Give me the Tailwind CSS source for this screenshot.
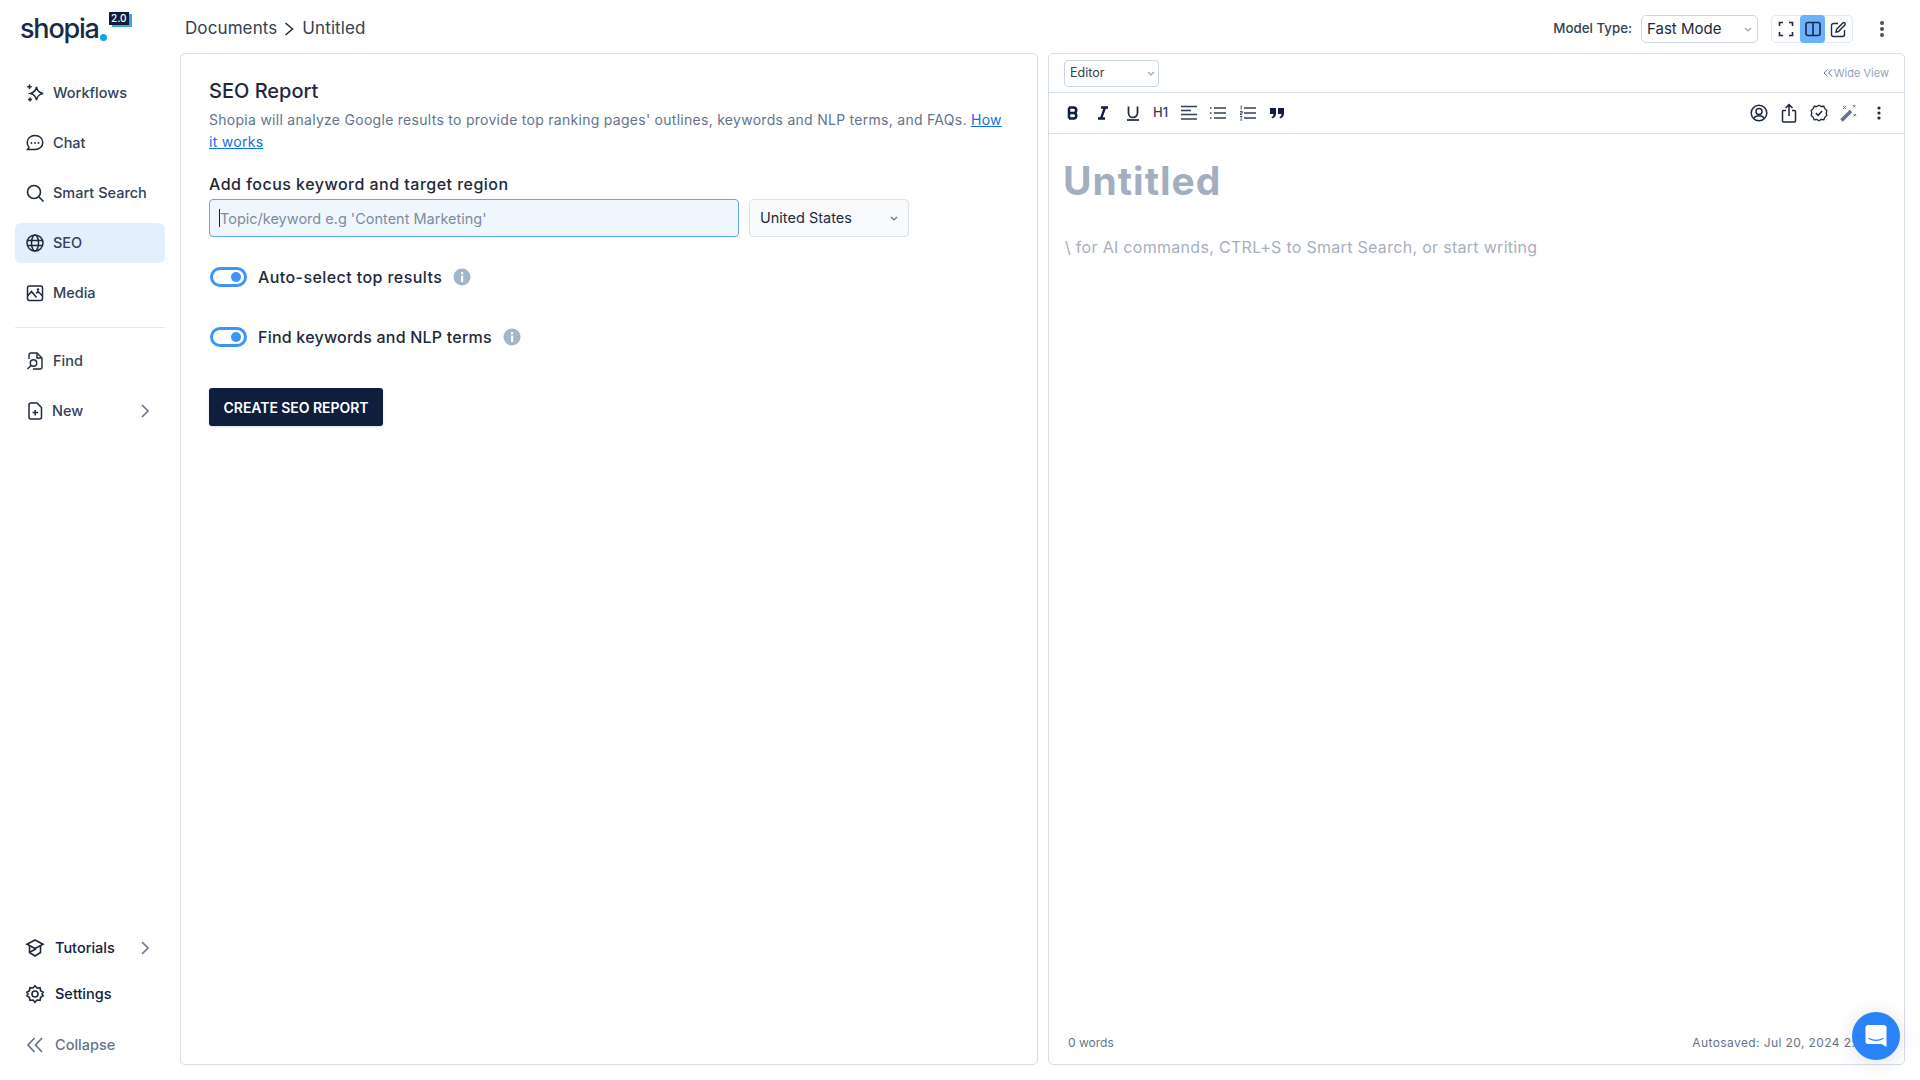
<!DOCTYPE html>
<html lang="en">
<head>
<meta charset="utf-8">
<title>Shopia SEO</title>
<script src="https://cdn.jsdelivr.net/npm/@tailwindcss/browser@4"></script>
</head>
<body class="bg-white font-['Inter',sans-serif] text-[#1e293b] overflow-hidden">
<div class="w-[1920px] h-[1080px] flex flex-col relative overflow-hidden">

  <!-- top bar -->
  <header class="h-[53px] pt-[5px] shrink-0 flex items-center">
    <div class="w-[185px] pl-[20px] flex items-start shrink-0">
      <span class="text-[27px] leading-[30px] font-medium tracking-[-1.2px] text-[#172a46]">shopia</span>
      <span class="w-[7px] h-[7px] rounded-full bg-[#0ea5e9] mt-[20px] ml-[1px]"></span>
      <span class="relative ml-[2px] -mt-[2px] w-[20px] h-[13px] bg-[#0f1e3d] text-white text-[10px] leading-[13px] text-center font-medium shadow-[3px_2px_0_#38a3f1]">2.0</span>
    </div>
    <nav class="flex items-center text-[17px] text-[#334155]">
      <span class="tracking-[0.1px]">Documents</span>
      <svg class="ml-[6px] mr-[7px]" width="12" height="16" viewBox="0 0 12 16" fill="none" stroke="#1e293b" stroke-width="1.5"><path d="M2.500 2l7 6-7 6"/></svg>
      <span class="tracking-[0.1px]">Untitled</span>
    </nav>
    <div class="ml-auto flex items-center pr-[30px]">
      <span class="text-[13.300px] font-medium text-[#334155] mr-[9px]">Model Type:</span>
      <div class="relative w-[117px] h-[28px] border border-[#cbd5e1] rounded-[5px] flex items-center pl-[5px] text-[15px] text-[#1e293b]">Fast Mode
        <svg class="absolute right-[4px] top-[10px]" width="10" height="8" viewBox="0 0 10 8" fill="none" stroke="#94a3b8" stroke-width="1.2"><path d="M2 2l3 3 3-3"/></svg>
      </div>
      <div class="ml-[13px] w-[82px] h-[28px] border border-[#e2e8f0] rounded-[5px] flex items-center">
        <div class="w-[28px] h-full flex items-center justify-center">
          <svg width="16" height="16" viewBox="0 0 16 16" fill="none" stroke="#1e293b" stroke-width="1.6"><path d="M1.500 5V1.500H5M11 1.500h3.500V5M14.500 11v3.500H11M5 14.500H1.500V11"/></svg>
        </div>
        <div class="w-[25px] h-[28px] bg-[#6cb1ff] rounded-[4px] flex items-center justify-center">
          <svg width="16" height="16" viewBox="0 0 16 16" fill="none" stroke="#1e293b" stroke-width="1.6"><rect x="1" y="1.500" width="14" height="13" rx="2"/><path d="M8 1.500v13"/></svg>
        </div>
        <div class="w-[27px] h-full flex items-center justify-center">
          <svg width="17" height="17" viewBox="0 0 17 17" fill="none" stroke="#1e293b" stroke-width="1.4"><path d="M8 2.500H3.500a2 2 0 0 0-2 2v9a2 2 0 0 0 2 2h9a2 2 0 0 0 2-2V9"/><path d="M6.500 8.500l6.300-6.400a1.400 1.400 0 0 1 2 2L8.500 10.500l-2.500.5z"/></svg>
        </div>
      </div>
      <svg class="ml-[21px]" width="16" height="20" viewBox="0 0 16 20" fill="#475569"><circle cx="8" cy="4" r="2"/><circle cx="8" cy="10" r="2"/><circle cx="8" cy="16" r="2"/></svg>
    </div>
  </header>

  <div class="flex-1 flex min-h-0 pb-[15px]">
    <!-- sidebar -->
    <aside class="w-[180px] shrink-0 pl-[15px] pr-[15px] flex flex-col text-[14.500px] font-medium text-[#334155]">
      <div class="mt-[20px] flex flex-col">
        <a class="h-[40px] mb-[10px] flex items-center px-[10px] gap-[8px] rounded-[6px]">
          <svg width="20" height="20" viewBox="0 0 20 20" fill="none" stroke="#1e293b" stroke-width="1.5"><path d="M11.500 4c.8 4 2.200 5.500 6.500 6.500-4.300 1-5.700 2.500-6.500 6.500-.8-4-2.200-5.500-6-6.500 3.800-1 5.200-2.500 6-6.500z"/><path d="M4.500 1.500v4.500M2.300 3.700h4.400M5 14.500v4M3 16.500h4"/></svg>
          Workflows</a>
        <a class="h-[40px] mb-[10px] flex items-center px-[10px] gap-[8px] rounded-[6px]">
          <svg width="20" height="20" viewBox="0 0 20 20" fill="none" stroke="#1e293b" stroke-width="1.5"><path d="M10 2.500c4.500 0 7.800 3 7.800 7s-3.300 7-7.800 7H2.500l1.500-2.200C2.800 13 2.200 11.500 2.200 9.500c0-4 3.300-7 7.800-7z"/><path d="M6.500 10h.01M10 10h.01M13.500 10h.01" stroke-linecap="round" stroke-width="1.800"/></svg>
          Chat</a>
        <a class="h-[40px] mb-[10px] flex items-center px-[10px] gap-[8px] rounded-[6px]">
          <svg width="20" height="20" viewBox="0 0 20 20" fill="none" stroke="#1e293b" stroke-width="1.6"><circle cx="9" cy="9" r="6.500"/><path d="M14 14l4.500 4.500"/></svg>
          Smart Search</a>
        <a class="h-[40px] mb-[10px] flex items-center px-[10px] gap-[8px] rounded-[6px] bg-[#e3effd]">
          <svg width="20" height="20" viewBox="0 0 20 20" fill="none" stroke="#1e293b" stroke-width="1.5"><circle cx="10" cy="10" r="8"/><ellipse cx="10" cy="10" rx="3.500" ry="8"/><path d="M2 7.500h16M2 12.500h16"/></svg>
          SEO</a>
        <a class="h-[40px] flex items-center px-[10px] gap-[8px] rounded-[6px]">
          <svg width="20" height="20" viewBox="0 0 20 20" fill="none" stroke="#1e293b" stroke-width="1.5"><rect x="2.500" y="3" width="15" height="14.500" rx="2"/><path d="M2.500 13l4-4.500 5 6M11 10.500l2-2 4.500 4.500"/><circle cx="13" cy="6.500" r=".6"/></svg>
          Media</a>
      </div>
      <div class="h-px bg-[#e2e8f0] mt-[14px] mb-[13px]"></div>
      <a class="h-[40px] mb-[10px] flex items-center px-[10px] gap-[8px]">
        <svg width="20" height="20" viewBox="0 0 20 20" fill="none" stroke="#1e293b" stroke-width="1.4"><path d="M4 8V4a2 2 0 0 1 2-2h6l5 5v9a2 2 0 0 1-2 2H8"/><path d="M12 2.500V7h4.500"/><circle cx="8.500" cy="12" r="3.200"/><path d="M6 14.500L2.500 18"/></svg>
        Find</a>
      <a class="h-[40px] flex items-center px-[10px] gap-[7px]">
        <svg width="20" height="20" viewBox="0 0 20 20" fill="none" stroke="#1e293b" stroke-width="1.500"><path d="M4 4a2 2 0 0 1 2-2h6l4.500 4.500V16a2 2 0 0 1-2 2H6a2 2 0 0 1-2-2z"/><path d="M7.500 11.500h5.500M10.200 9v5.500"/></svg>
        New
        <svg class="ml-auto mr-[5px]" width="10" height="16" viewBox="0 0 10 16" fill="none" stroke="#64748b" stroke-width="1.6"><path d="M2 2l6 6-6 6"/></svg>
      </a>
      <div class="mt-auto flex flex-col">
        <a class="h-[40px] mb-[6px] flex items-center px-[10px] gap-[10px] text-[#0f1e3d]">
          <svg width="20" height="20" viewBox="0 0 20 20" fill="none" stroke="#1e293b" stroke-width="1.600"><path d="M10 2L2 6.200 10 10.500l8-4.300z"/><path d="M4.500 8v6.500L10 18l5.500-3.500V8"/><path d="M5 14l6-3"/></svg>
          Tutorials
          <svg class="ml-auto mr-[5px]" width="10" height="16" viewBox="0 0 10 16" fill="none" stroke="#64748b" stroke-width="1.6"><path d="M2 2l6 6-6 6"/></svg>
        </a>
        <a class="h-[40px] mb-[11px] flex items-center px-[10px] gap-[10px] text-[#0f1e3d]">
          <svg width="20" height="20" viewBox="0 0 20 20" fill="none" stroke="#1e293b" stroke-width="1.600"><path d="M10 1.800l2 2.200 3-.3.600 3 2.600 1.500L17 10l1.200 1.800-2.600 1.500-.6 3-3-.3-2 2.200-2-2.200-3 .3-.6-3-2.600-1.500L3 10 1.800 8.200l2.600-1.500.6-3 3 .3z"/><circle cx="10" cy="10" r="3"/></svg>
          Settings</a>
        <a class="h-[40px] flex items-center px-[10px] gap-[10px] text-[#64748b]">
          <svg width="20" height="20" viewBox="0 0 20 20" fill="none" stroke="#64748b" stroke-width="1.700"><path d="M9.500 3L3 10l6.500 7M17 3l-6.500 7 6.500 7"/></svg>
          Collapse</a>
      </div>
    </aside>

    <!-- left panel -->
    <main class="w-[858px] border border-[#d5dfea] rounded-[5px] shrink-0 pl-[28px] pr-[30px] pt-[24px]">
      <h1 class="text-[20px] leading-[26px] font-medium text-[#1e293b]">SEO Report</h1>
      <p class="mt-[5px] text-[14px] leading-[22px] text-[#64748b] tracking-[0.28px] w-[800px]">Shopia will analyze Google results to provide top ranking pages' outlines, keywords and NLP terms, and FAQs. <a class="text-[#0f6fe8] underline">How</a><br><a class="text-[#0f6fe8] underline">it works</a></p>
      <h2 class="mt-[19px] text-[16px] leading-[24px] font-medium text-[#1e293b] tracking-[0.48px]">Add focus keyword and target region</h2>
      <div class="mt-[3px] flex gap-[10px]">
        <div class="relative w-[530px] h-[38px]">
          <input class="w-full h-full bg-[#f0f6fd] border border-[#60a5fa] rounded-[4px] pl-[10px] text-[14.500px] outline-none placeholder:text-[#7c8ba1]" placeholder="Topic/keyword e.g 'Content Marketing'">
          <span class="absolute left-[10px] top-[10px] w-px h-[18px] bg-[#0f1e3d]"></span>
        </div>
        <div class="relative w-[160px] h-[38px] bg-[#f8fafc] border border-[#dbe3ec] rounded-[4px] flex items-center pl-[10px] text-[14.500px] text-[#1e293b]">United States
          <svg class="absolute right-[9px] top-[15px]" width="10" height="8" viewBox="0 0 10 8" fill="none" stroke="#64748b" stroke-width="1.2"><path d="M2 2l3 3 3-3"/></svg>
        </div>
      </div>
      <div class="mt-[30px] flex items-center h-[20px]">
        <span class="ml-[1px] w-[37px] h-[20px] rounded-full border-[3px] border-[#3b93fb] bg-white flex items-center justify-end pr-[3px]"><span class="w-[10px] h-[10px] rounded-full bg-[#3b93fb]"></span></span>
        <span class="ml-[11px] text-[16px] font-medium text-[#1e293b] tracking-[0.42px]">Auto-select top results</span>
        <svg class="ml-[11px]" width="18" height="18" viewBox="0 0 18 18"><circle cx="9" cy="9" r="8.500" fill="#a3b5c9"/><rect x="8" y="7.500" width="2.200" height="6.500" fill="#fff"/><rect x="8" y="4" width="2.200" height="2.200" fill="#fff"/></svg>
      </div>
      <div class="mt-[40px] flex items-center h-[20px]">
        <span class="ml-[1px] w-[37px] h-[20px] rounded-full border-[3px] border-[#3b93fb] bg-white flex items-center justify-end pr-[3px]"><span class="w-[10px] h-[10px] rounded-full bg-[#3b93fb]"></span></span>
        <span class="ml-[11px] text-[16px] font-medium text-[#1e293b] tracking-[0.22px]">Find keywords and NLP terms</span>
        <svg class="ml-[11px]" width="18" height="18" viewBox="0 0 18 18"><circle cx="9" cy="9" r="8.500" fill="#a3b5c9"/><rect x="8" y="7.500" width="2.200" height="6.500" fill="#fff"/><rect x="8" y="4" width="2.200" height="2.200" fill="#fff"/></svg>
      </div>
      <button class="mt-[41px] w-[174px] h-[38px] bg-[#0f1e3d] rounded-[3px] text-white text-[14px] font-semibold tracking-[-0.05px] shadow-sm">CREATE SEO REPORT</button>
    </main>

    <!-- right panel -->
    <section class="ml-[10px] w-[857px] border border-[#d5dfea] rounded-[5px] shrink-0 flex flex-col relative">
      <div class="h-[39px] border-b border-[#d5dfea] flex items-center pl-[15px] pr-[15px] shrink-0">
        <div class="relative w-[95px] h-[27px] border border-[#cbd5e1] rounded-[4px] flex items-center pl-[5px] text-[12.500px] text-[#334155]">Editor
          <svg class="absolute right-[2px] top-[9px]" width="10" height="8" viewBox="0 0 10 8" fill="none" stroke="#94a3b8" stroke-width="1.1"><path d="M2 2l3 3 3-3"/></svg>
        </div>
        <div class="ml-auto flex items-center text-[11px] text-[#94a3b8]">
          <svg class="mr-[1px]" width="10" height="10" viewBox="0 0 10 10" fill="none" stroke="#64748b" stroke-width="1"><path d="M4.500 1.500L1 5l3.500 3.500M9 1.500L5.500 5 9 8.500"/></svg>
          Wide View</div>
      </div>
      <div class="h-[41px] border-b border-[#d5dfea] flex items-center pl-[16px] pr-[10px] shrink-0 text-[#1e293b]">
        <div class="w-[30px] h-[20px] flex items-center"><svg width="16" height="16" viewBox="0 0 16 16" fill="none" stroke="#0f1e3d" stroke-width="2.500"><path d="M4 2.500v11M4 2.500h4.500a2.700 2.700 0 0 1 0 5.500H4M4 8h5a2.800 2.800 0 0 1 0 5.500H4"/></svg></div>
        <div class="w-[30px] h-[20px] flex items-center"><svg width="16" height="16" viewBox="0 0 16 16" fill="none" stroke="#0f1e3d" stroke-width="2.300"><path d="M6 2.500h7M3 13.500h7M10 2.500l-4 11"/></svg></div>
        <div class="w-[28px] h-[20px] flex items-center"><svg width="16" height="16" viewBox="0 0 16 16" fill="none" stroke="#1e293b" stroke-width="1.700"><path d="M3.500 1.500v6.500a4.500 4.500 0 0 0 9 0V1.500"/><path d="M2 15h12"/></svg></div>
        <div class="w-[28px] h-[20px] flex items-center text-[13px] text-[#334155] font-medium">H1</div>
        <div class="w-[29px] h-[20px] flex items-center"><svg width="16" height="16" viewBox="0 0 16 16" fill="none" stroke="#334155" stroke-width="1.500"><path d="M0 1.500h16M0 5.500h10M0 9.500h16M0 14h16"/></svg></div>
        <div class="w-[30px] h-[20px] flex items-center"><svg width="16" height="16" viewBox="0 0 16 16" fill="none" stroke="#334155" stroke-width="1.500"><path d="M4 3h12M4 8h12M4 13h12M0 3h1.500M0 8h1.500M0 13h1.500"/></svg></div>
        <div class="w-[30px] h-[20px] flex items-center"><svg width="16" height="16" viewBox="0 0 16 16" fill="none" stroke="#334155" stroke-width="1.500"><path d="M4 3h12M4 8h12M4 13h12" /><path d="M1.200 .5v4M0 6.500h2.300v1.500H0v1.500h2.300M0 11.500h2.300M.5 13h1.800M0 15h2.300" stroke-width=".9"/></svg></div>
        <div class="w-[20px] h-[20px] flex items-center"><svg width="14" height="12" viewBox="0 0 14 12" fill="#0f1e3d"><path d="M0 1h6v5.500C6 9 4.500 11 2 11.500L1.500 10C3 9.500 3.500 8.500 3.500 7H0zM8 1h6v5.500c0 2.500-1.500 4.500-4 5L9.500 10C11 9.500 11.500 8.500 11.500 7H8z"/></svg></div>
        <div class="ml-auto flex items-center">
          <div class="w-[30px] flex justify-center"><svg width="18" height="18" viewBox="0 0 18 18" fill="none" stroke="#1e293b" stroke-width="1.500"><circle cx="9" cy="9" r="7.800"/><circle cx="9" cy="7.500" r="3"/><path d="M3.800 14.500c1-2 3-2.800 5.200-2.800s4.200.8 5.200 2.800"/></svg></div>
          <div class="w-[30px] flex justify-center"><svg width="16" height="20" viewBox="0 0 16 20" fill="none" stroke="#1e293b" stroke-width="1.500"><path d="M5 7.500H2.500a1 1 0 0 0-1 1V18a1 1 0 0 0 1 1h11a1 1 0 0 0 1-1V8.500a1 1 0 0 0-1-1H11M8 13V1.500M4.500 5L8 1.500 11.500 5"/></svg></div>
          <div class="w-[30px] flex justify-center"><svg width="18" height="18" viewBox="0 0 18 18" fill="none" stroke="#1e293b" stroke-width="1.500"><path d="M9 1.200l2.200 1.300 2.600-.2 1 2.400 2 1.700-.6 2.600.6 2.600-2 1.700-1 2.400-2.600-.2L9 16.800l-2.200-1.300-2.600.2-1-2.400-2-1.700.6-2.600-.6-2.600 2-1.700 1-2.400 2.600.2z" stroke-width="1.300"/><path d="M5.800 9l2.300 2.300 4-4.300"/></svg></div>
          <div class="w-[30px] flex justify-center"><svg width="18" height="18" viewBox="0 0 18 18" fill="none"><path d="M1.500 16.500L11 7" stroke="#64748b" stroke-width="3.500"/><path d="M3 2l3 3M6 2L3 5M13 1l2.500 2.500M15.500 1L13 3.500M13.500 10l2.500 2.500M16 10l-2.500 2.500" stroke="#64748b" stroke-width="1"/></svg></div>
          <div class="w-[30px] flex justify-center"><svg width="6" height="16" viewBox="0 0 6 16" fill="#1e293b"><circle cx="3" cy="3" r="1.600"/><circle cx="3" cy="8" r="1.600"/><circle cx="3" cy="13" r="1.600"/></svg></div>
        </div>
      </div>
      <div class="flex-1 pl-[14px] pt-[22px]">
        <h2 class="text-[39px] leading-[50px] font-bold text-[#a3afbf] tracking-[1px]">Untitled</h2>
        <p class="mt-[29px] pl-[2px] text-[16px] leading-[24px] text-[#a7b0bd] tracking-[0.3px]">\ for AI commands, CTRL+S to Smart Search, or start writing</p>
      </div>
      <div class="h-[40px] flex items-center pl-[19px] pr-[41px] text-[12px] text-[#64748b] shrink-0 pb-[2px] overflow-hidden">
        <span>0 words</span>
        <span class="ml-auto tracking-[0.4px]">Autosaved: Jul 20, 2024 2:2</span>
      </div>
    </section>
  </div>

  <!-- chat bubble -->
  <div class="absolute left-[1852px] top-[1012px] w-[48px] h-[48px] rounded-full bg-[#2b83fb] shadow-[0_2px_20px_rgba(0,0,0,0.14)] flex items-center justify-center">
    <svg width="22" height="24" viewBox="0 0 22 24"><path d="M3 1h16a2.500 2.500 0 0 1 2.500 2.500V23l-5-3H3A2.500 2.500 0 0 1 .5 17.500v-14A2.500 2.500 0 0 1 3 1z" fill="#fff"/><path d="M4 14.500c4 2.400 10 2.400 14 0" fill="none" stroke="#2b83fb" stroke-width="1.300" stroke-linecap="round"/></svg>
  </div>
</div>
</body>
</html>
